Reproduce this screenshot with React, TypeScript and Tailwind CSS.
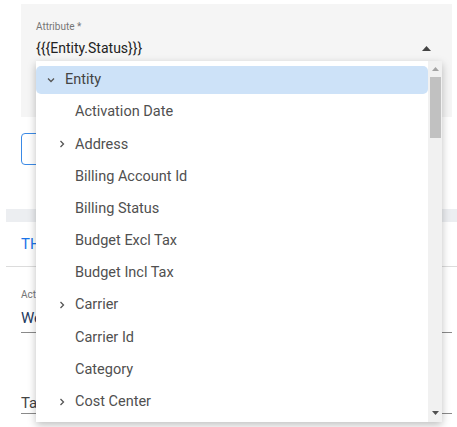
import React from "react";

const items: { label: string; expandable?: boolean }[] = [
  { label: "Activation Date" },
  { label: "Address", expandable: true },
  { label: "Billing Account Id" },
  { label: "Billing Status" },
  { label: "Budget Excl Tax" },
  { label: "Budget Incl Tax" },
  { label: "Carrier", expandable: true },
  { label: "Carrier Id" },
  { label: "Category" },
  { label: "Cost Center", expandable: true },
];

function ChevronDown() {
  return (
    <svg width="8" height="6" viewBox="0 0 8 6" className="shrink-0">
      <path d="M1 1.5 L4 4.5 L7 1.5" fill="none" stroke="#555" strokeWidth="1.3" />
    </svg>
  );
}

function ChevronRight() {
  return (
    <svg width="6" height="8" viewBox="0 0 6 8" className="shrink-0">
      <path d="M1.5 1 L4.5 4 L1.5 7" fill="none" stroke="#555" strokeWidth="1.3" />
    </svg>
  );
}

export default function App() {
  return (
    <div
      className="relative w-[457px] h-[427px] overflow-hidden bg-white"
      style={{ fontFamily: "Roboto, 'Noto Sans', sans-serif" }}
    >
      {/* background form */}
      <div className="flex flex-col pt-[4px]">
        <div className="ml-[21px] mr-[5px] h-[113px] bg-[#f5f5f5] px-[15px] pt-[16px]">
          <div className="text-[10px] leading-[14px] text-[#757575]">Attribute *</div>
          <div className="flex items-center justify-between h-[22px] mt-[3px] pr-[6px]">
            <span className="text-[14px] text-[#222]">{"{{{Entity.Status}}}"}</span>
            <svg width="9" height="5" viewBox="0 0 9 5">
              <path d="M0 5 L4.5 0 L9 5 Z" fill="#444" />
            </svg>
          </div>
          <div className="mt-[4px] h-px bg-[#9e9e9e]" />
        </div>
        <div className="ml-[21px] mt-[16px] w-[110px] h-[32px] rounded-[4px] border border-[#3b8ae6]" />
        <div className="ml-[6px] mt-[44px] h-[13px] bg-[#eceef1]" />
        <div className="ml-[21px] h-[44px] flex items-center text-[15px] text-[#1a73e8]">THEN</div>
        <div className="ml-[6px] h-px bg-[#dcdcdc]" />
        <div className="ml-[21px] mr-[5px] mt-[21px]">
          <div className="text-[10px] leading-[14px] text-[#757575]">Action</div>
          <div className="mt-[5px] text-[15px] leading-[22px] text-[#1f3a5f]">Webhook</div>
          <div className="mt-[3px] h-px bg-[#8a8a8a]" />
        </div>
        <div className="ml-[21px] mr-[5px] mt-[60px]">
          <div className="text-[15px] leading-[20px] text-[#444]">Target</div>
          <div className="h-px bg-[#8a8a8a]" />
        </div>
      </div>

      {/* dropdown menu */}
      <div className="absolute left-[36px] top-[61px] w-[406px] h-[361px] bg-white shadow-[0_3px_8px_rgba(0,0,0,0.25)] flex">
        <div className="flex-1 flex flex-col pt-[5px] gap-[4.2px] overflow-hidden">
          <div className="h-[28px] shrink-0 rounded-[5px] bg-[#cde2f8] flex items-center pl-[11px] gap-[10px]">
            <ChevronDown />
            <span className="text-[14.5px] text-[#444]">Entity</span>
          </div>
          {items.map((it) => (
            <div key={it.label} className="h-[28px] shrink-0 flex items-center pl-[23px]">
              <div className="w-[16px] flex items-center">{it.expandable && <ChevronRight />}</div>
              <span className="text-[14.5px] text-[#505050]">{it.label}</span>
            </div>
          ))}
        </div>
        <div className="w-[14px] bg-[#f1f1f1] flex flex-col items-center">
          <div className="h-[16px] flex items-center justify-center">
            <svg width="7" height="4" viewBox="0 0 7 4">
              <path d="M0 4 L3.5 0 L7 4 Z" fill="#a3a3a3" />
            </svg>
          </div>
          <div className="w-[11px] h-[61px] bg-[#c1c1c1]" />
          <div className="flex-1" />
          <div className="h-[18px] flex items-center justify-center">
            <svg width="7" height="4" viewBox="0 0 7 4">
              <path d="M0 0 L3.5 4 L7 0 Z" fill="#505050" />
            </svg>
          </div>
        </div>
      </div>
    </div>
  );
}
